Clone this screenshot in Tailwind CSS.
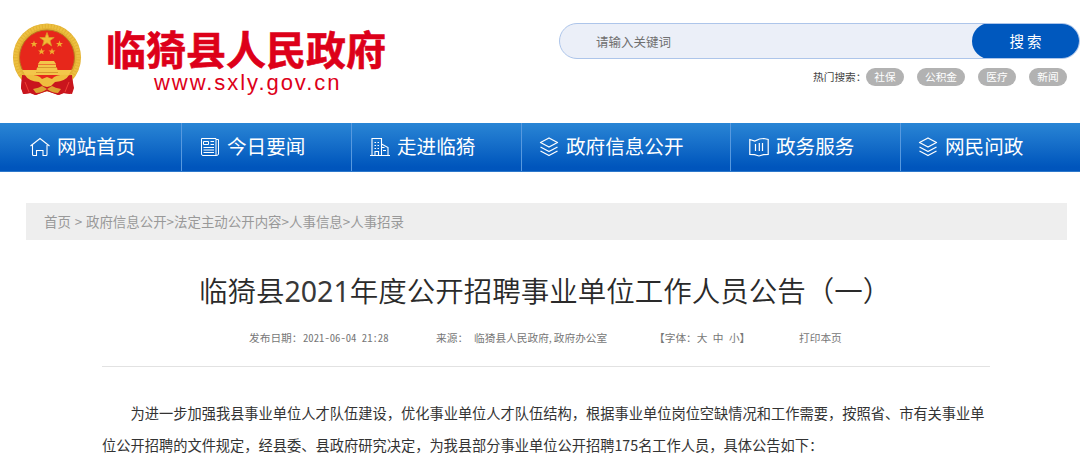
<!DOCTYPE html>
<html lang="zh-CN">
<head>
<meta charset="utf-8">
<title>临猗县人民政府</title>
<script src="https://cdn.jsdelivr.net/npm/@tailwindcss/browser@4"></script>
</head>
<body class="h-[471px] overflow-hidden bg-white font-['Noto_Sans_CJK_SC',sans-serif] whitespace-nowrap">
<header class="flex h-[123px] justify-between">
  <div class="flex pl-[11px]">
    <svg class="mt-[22px] h-[76px] w-[72px] shrink-0" viewBox="0 0 72 76">
      <path d="M12 50L10 66l2 6 7-1 5 2 12-4 12 4 5-2 8 1 2-6-3-16z" fill="#c8141c"/>
      <circle cx="36" cy="35.500" r="34" fill="#e3b133"/>
      <circle cx="36" cy="35.500" r="31.500" fill="none" stroke="#ecc040" stroke-width="4" stroke-dasharray="2 1"/>
      <circle cx="36" cy="35.500" r="27.500" fill="#e7271b" stroke="#b8791f" stroke-width="1"/>
      <path d="M36 10.500l1.900 5h5.300l-4.200 3.200 1.600 5.200-4.600-3.100-4.600 3.100 1.600-5.200-4.200-3.200h5.300z" fill="#f2bd35" stroke="#d99a2a" stroke-width=".8"/>
      <g fill="#f0ad30">
        <path id="s" d="M23 18.500l.9 2.500h2.600l-2 1.600.7 2.500-2.200-1.500-2.200 1.500.7-2.500-2-1.600h2.600z"/>
        <use href="#s" x="25.500"/><use href="#s" x="7.500" y="7.500"/><use href="#s" x="18" y="7.500"/>
      </g>
      <path d="M29 39h14l2 3H27zM27 42.500h18v3h1l1 5H25l1-5h1zM11 48h50l-3 5H14z" fill="#f3c64a"/>
      <path d="M27 45.500h18M25 50.500h22" stroke="#c98425" stroke-width=".7"/>
      <path d="M11 53q13 0 17 7h16q4-7 17-7l1 13-3 6-7-1-5 2-11-4-11 4-5-2-7 1-3-6z" fill="#c9151d"/>
      <path d="M14 53q13-1 17 4l5-2 5 2q4-5 17-4-3 6-14 7l-4 4-4 1-4-1-4-4q-11-1-14-7z" fill="#efbd3f"/>
      <path d="M22 67q6-1 9-3l5 3 5-3q3 2 9 3l-3 4q-6 0-11-4-5 4-11 4z" fill="#dda331"/>
      <path d="M14 60l4 10M58 60l-4 10" fill="none" stroke="#f04137"/>
    </svg>
    <div class="ml-[23px] pt-[28px] text-[#dd0019]">
      <h1 class="h-[43px] text-[40px] leading-[40px] font-bold [-webkit-text-stroke:0.600px_#dd0019]">临猗县人民政府</h1>
      <div class="ml-[48px] font-['Liberation_Sans',sans-serif] text-[22px] leading-[24px] tracking-[1.950px]">www.sxly.gov.cn</div>
    </div>
  </div>
  <div class="w-[521px] pt-[23px]">
    <div class="flex h-[36px] justify-between overflow-hidden rounded-full border border-[#adc5ea] bg-[#ebeff8]">
      <span class="pl-[36px] text-[12.500px] leading-[35px] text-[#707070]">请输入关键词</span>
      <button class="-my-px -mr-px h-[36px] w-[108px] rounded-full bg-[#0058be] pl-[2px] text-center text-[14.500px] tracking-[3px] text-white">搜索</button>
    </div>
    <div class="mt-[8px] flex h-[19px] items-center pl-[254px] text-[10.700px] leading-[17px]">
      <span class="w-[53px] text-[#444]">热门搜索：</span>
      <a class="h-[18px] w-[38px] rounded-full bg-[#b2b2b2] text-center text-white">社保</a>
      <a class="ml-[13px] h-[18px] w-[48px] rounded-full bg-[#b2b2b2] text-center text-white">公积金</a>
      <a class="ml-[13px] h-[18px] w-[38px] rounded-full bg-[#b2b2b2] text-center text-white">医疗</a>
      <a class="ml-[13px] h-[18px] w-[38px] rounded-full bg-[#b2b2b2] text-center text-white">新闻</a>
    </div>
  </div>
</header>

<nav class="flex h-[49px] border-b border-[#2d78cb] bg-linear-to-b from-[#2985d5] to-[#0055bc] to-92% text-[19.600px] leading-[46px] text-white">
  <a class="flex w-[182px] border-r border-[#5799df] pl-[30px]">
    <svg class="mt-[14px] mr-[7px] size-[20px] shrink-0" viewBox="0 0 20 20" fill="none" stroke="#fff" stroke-width="1.100"><path d="M.5 9L10 1.500 19.500 9M2.500 8v9.500q0 1 1 1h3V13.500h6.500v5h3q1 0 1-1V8"/></svg>网站首页</a>
  <a class="flex w-[170px] border-r border-[#5799df] pl-[18px]">
    <svg class="mt-[14px] mr-[7px] size-[20px] shrink-0" viewBox="0 0 20 20" fill="none" stroke="#fff" stroke-width="1"><path d="M1.500 1.500h14.500v17H3q-1.500 0-1.500-1.500zM16 2.500h2.500V17q0 1.500-2.500 1.500M3.500 4.500h5v3h-5zM10.500 4.500h3.500M10.500 7.500h3.500M3.500 10.500h10.500M3.500 13h10.500M3.500 15.500h10.500"/></svg>今日要闻</a>
  <a class="flex w-[170px] border-r border-[#5799df] pl-[18px]">
    <svg class="mt-[14px] mr-[7px] size-[20px] shrink-0" viewBox="0 0 20 20" fill="none" stroke="#fff" stroke-width="1.100"><path d="M0 18.500h20M2 18.500v-17h9.500v17M11.500 7l6.500 3.500v8M11.500 10.500h3M4.500 5.500h1.500M7.500 5.500h1.500M4.500 8.500h1.500M7.500 8.500h1.500M4.500 11.500h1.500M7.500 11.500h1.500M5 18v-3.500h3.500v3.500M13 13.500h3"/></svg>走进临猗</a>
  <a class="flex w-[209px] border-r border-[#5799df] pl-[17px]">
    <svg class="mt-[14px] mr-[7px] size-[20px] shrink-0" viewBox="0 0 20 20" fill="none" stroke="#fff" stroke-width="1.300" stroke-linejoin="round"><path d="M10 1l8.500 4.500-8.500 4.500L1.500 5.500zM1.500 10l8.500 4.500 8.500-4.500M1.500 14l8.500 4.500 8.500-4.500"/></svg>政府信息公开</a>
  <a class="flex w-[170px] border-r border-[#5799df] pl-[18px]">
    <svg class="mt-[14px] mr-[7px] size-[20px] shrink-0" viewBox="0 0 20 20" fill="none" stroke="#fff" stroke-width="1.200"><path d="M.8 2.500l5 1.500 4.700-2 4.500-.5 4.200 1v15l-4.700 .2-4.500 1.300-4.500-1.300-4.700-.2zM6.500 7v7M10.300 6v8M13.500 6v8"/></svg>政务服务</a>
  <a class="flex flex-1 pl-[17px]">
    <svg class="mt-[14px] mr-[7px] size-[20px] shrink-0" viewBox="0 0 20 20" fill="none" stroke="#fff" stroke-width="1.300" stroke-linejoin="round"><path d="M10 1l8.500 4.500-8.500 4.500L1.500 5.500zM1.500 10l8.500 4.500 8.500-4.500M1.500 14l8.500 4.500 8.500-4.500"/></svg>网民问政</a>
</nav>

<main>
  <div class="mt-[31px] ml-[26px] h-[37px] w-[1041px] bg-[#eee] pl-[18px] text-[13.450px] leading-[36px] text-[#999]">首页<span class="mx-[0.800px]"> &gt; </span>政府信息公开&gt;法定主动公开内容&gt;人事信息&gt;人事招录</div>
  <article class="ml-[102px] w-[888px]">
    <h2 class="mt-[28px] h-[45px] pl-[97px] text-[28.500px] leading-[44px] font-[350] text-[#2a2a2a]">临猗县<span class="font-['Noto_Sans'] font-normal text-[#383838]">2021</span>年度公开招聘事业单位工作人员公告（一）</h2>
    <div class="flex h-[54px] border-b border-[#e2e2e2] pt-[16px] pl-[147px] text-[10.700px] leading-[18px] text-[#777]">
      <span class="w-[54px]">发布日期：</span>
      <span class="w-[133px] [font-feature-settings:'hwid']">2021-06-04 21:28</span>
      <span class="w-[38px]">来源：</span>
      <span class="w-[180px]">临猗县人民政府,<span class="ml-[2px]">政府办公室</span></span>
      <span class="w-[145px] [word-spacing:3px]">【字体：大 中 小】</span>
      <span>打印本页</span>
    </div>
    <p class="mt-[30px] w-[900px] text-[14.240px] leading-[31.500px] text-[#333]"><span class="pl-[28.500px]">为进一步加强我县事业单位人才队伍建设，优化事业单位人才队伍结构，根据事业单位岗位空缺情况和工作需要，按照省、市有关事业单</span><br>位公开招聘的文件规定，经县委、县政府研究决定，为我县部分事业单位公开招聘175名工作人员，具体公告如下：</p>
  </article>
</main>
</body>
</html>
